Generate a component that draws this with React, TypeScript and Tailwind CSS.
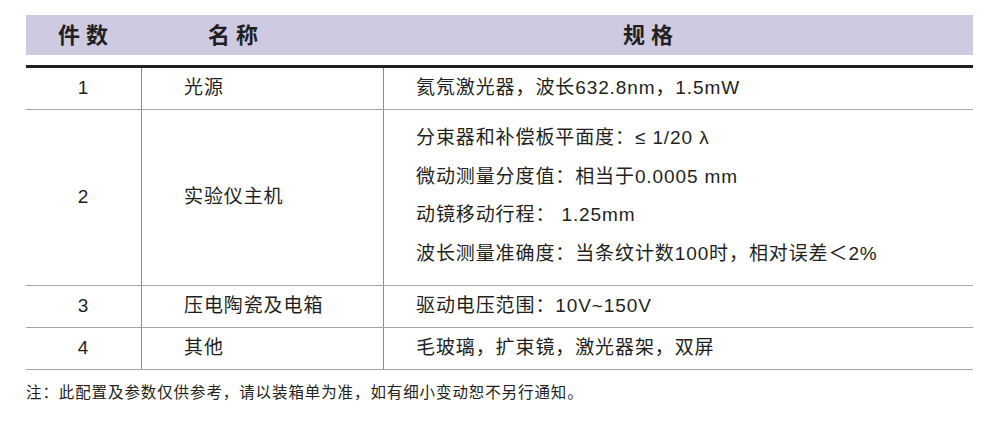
const font = {
  fontFamily: '"Liberation Sans", "Noto Sans CJK SC", sans-serif',
};

const rows = [
  { no: "1", name: "光源", specs: ["氦氖激光器，波长632.8nm，1.5mW"], h: "h-[42px]" },
  {
    no: "2",
    name: "实验仪主机",
    specs: [
      "分束器和补偿板平面度：≤ 1/20 λ",
      "微动测量分度值：相当于0.0005 mm",
      "动镜移动行程： 1.25mm",
      "波长测量准确度：当条纹计数100时，相对误差＜2%",
    ],
    h: "h-[176px]",
  },
  { no: "3", name: "压电陶瓷及电箱", specs: ["驱动电压范围：10V~150V"], h: "h-[42px]" },
  { no: "4", name: "其他", specs: ["毛玻璃，扩束镜，激光器架，双屏"], h: "h-[42px]" },
];

export default function App() {
  return (
    <div className="min-h-[425px] bg-white pt-[15px] pl-[26px] text-[#231f20]" style={font}>
      <div className="w-[947px]">
        {/* header band */}
        <div className="grid h-[40px] grid-cols-[116px_242px_1fr] items-center bg-[#cdcae2] text-[22px] font-bold tracking-[6px]">
          <span className="pl-[32px]">件数</span>
          <span className="pl-[66px]">名称</span>
          <span className="pl-[239px]">规格</span>
        </div>

        <div className="mt-[10px] h-[3px] bg-[#231f20]" />

        {rows.map((row) => (
          <div
            key={row.no}
            className={`grid grid-cols-[116px_242px_1fr] border-b-[1.5px] border-[#a3a3a3] text-[19px] tracking-[0.9px] ${row.h}`}
          >
            <div className="flex items-center justify-center border-r-[1.5px] border-[#8c8c8c]">
              {row.no}
            </div>
            <div className="flex items-center border-r-[1.5px] border-[#8c8c8c] pl-[42px]">
              {row.name}
            </div>
            {row.specs.length > 1 ? (
              <div className="flex flex-col pt-[9px] pl-[32px] leading-[38.7px]">
                {row.specs.map((s) => (
                  <span key={s}>{s}</span>
                ))}
              </div>
            ) : (
              <div className="flex items-center pl-[32px]">{row.specs[0]}</div>
            )}
          </div>
        ))}

        <p className="mt-[11px] text-[15.5px] leading-[24px] tracking-[0.9px]">
          注：此配置及参数仅供参考，请以装箱单为准，如有细小变动恕不另行通知。
        </p>
      </div>
    </div>
  );
}
